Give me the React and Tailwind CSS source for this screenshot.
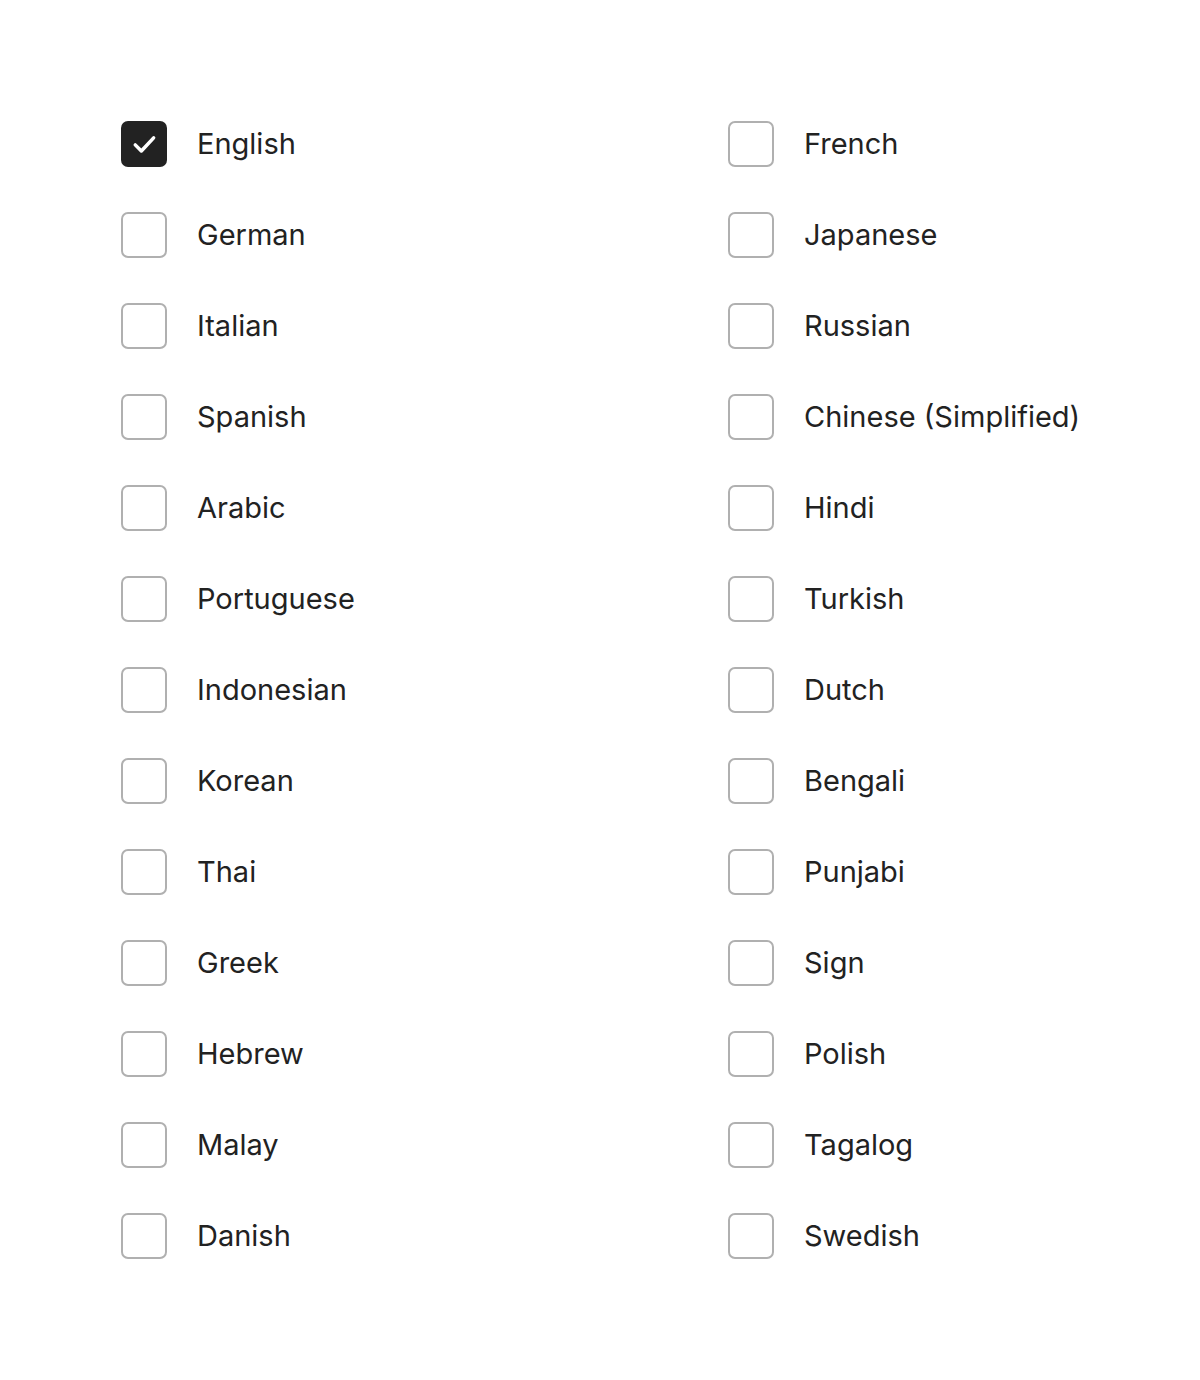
import React from "react";

const left = ["English","German","Italian","Spanish","Arabic","Portuguese","Indonesian","Korean","Thai","Greek","Hebrew","Malay","Danish"];
const right = ["French","Japanese","Russian","Chinese (Simplified)","Hindi","Turkish","Dutch","Bengali","Punjabi","Sign","Polish","Tagalog","Swedish"];

function Item({ label, checked }) {
  return (
    <div className="flex items-center h-[46px]">
      {checked ? (
        <div className="w-[46px] h-[46px] rounded-[7px] bg-[#222222] flex items-center justify-center shrink-0">
          <svg width="28" height="28" viewBox="0 0 32 32" fill="none" stroke="white" strokeWidth="4" strokeLinecap="round" strokeLinejoin="round">
            <path d="M6 17l7 7L27 9" />
          </svg>
        </div>
      ) : (
        <div className="w-[46px] h-[46px] rounded-[7px] border-2 border-[#b0b0b0] bg-white shrink-0" />
      )}
      <span className="ml-[30px] -mt-[2px] text-[29px] text-[#222222] leading-none">{label}</span>
    </div>
  );
}

export default function App() {
  const rows = [];
  left.forEach((l, i) => {
    rows.push(<Item key={"l" + i} label={l} checked={i === 0} />);
    rows.push(<Item key={"r" + i} label={right[i]} />);
  });
  return (
    <div className="w-[1200px] h-[1380px] bg-white font-['Inter',sans-serif]">
      <div className="pt-[121px] pl-[121px] grid grid-cols-[607px_1fr] gap-y-[45px]">
        {rows}
      </div>
    </div>
  );
}
